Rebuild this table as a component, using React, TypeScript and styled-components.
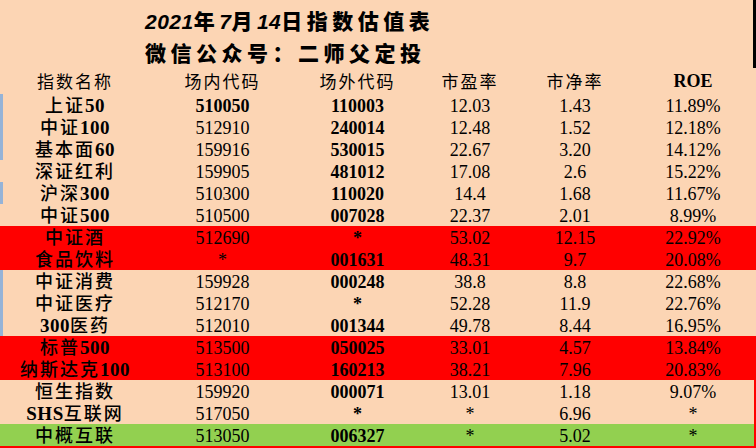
import React from 'react'
import styled, { createGlobalStyle } from 'styled-components'

const GlobalStyle = createGlobalStyle`
  html, body {
    margin: 0;
    padding: 0;
    background: #fcd5b4;
  }
`

type Tone = 'plain' | 'red' | 'green'

interface Fund {
  name: string
  inside: string
  outside: string
  pe: string
  pb: string
  roe: string
  tone?: Tone
  marked?: boolean
  boldInside?: boolean
}

const top: Fund[] = [
  { name: '上证50', inside: '510050', outside: '110003', pe: '12.03', pb: '1.43', roe: '11.89%', marked: true, boldInside: true },
  { name: '中证100', inside: '512910', outside: '240014', pe: '12.48', pb: '1.52', roe: '12.18%', marked: true },
  { name: '基本面60', inside: '159916', outside: '530015', pe: '22.67', pb: '3.20', roe: '14.12%', marked: true },
  { name: '深证红利', inside: '159905', outside: '481012', pe: '17.08', pb: '2.6', roe: '15.22%' },
  { name: '沪深300', inside: '510300', outside: '110020', pe: '14.4', pb: '1.68', roe: '11.67%', marked: true },
  { name: '中证500', inside: '510500', outside: '007028', pe: '22.37', pb: '2.01', roe: '8.99%' },
  { name: '中证酒', inside: '512690', outside: '*', pe: '53.02', pb: '12.15', roe: '22.92%', tone: 'red' },
  { name: '食品饮料', inside: '*', outside: '001631', pe: '48.31', pb: '9.7', roe: '20.08%', tone: 'red' },
  { name: '中证消费', inside: '159928', outside: '000248', pe: '38.8', pb: '8.8', roe: '22.68%', marked: true },
  { name: '中证医疗', inside: '512170', outside: '*', pe: '52.28', pb: '11.9', roe: '22.76%', marked: true },
  { name: '300医药', inside: '512010', outside: '001344', pe: '49.78', pb: '8.44', roe: '16.95%', marked: true },
  { name: '标普500', inside: '513500', outside: '050025', pe: '33.01', pb: '4.57', roe: '13.84%', tone: 'red' },
  { name: '纳斯达克100', inside: '513100', outside: '160213', pe: '38.21', pb: '7.96', roe: '20.83%', tone: 'red' },
]

const tail: Fund[] = [
  { name: '恒生指数', inside: '159920', outside: '000071', pe: '13.01', pb: '1.18', roe: '9.07%' },
  { name: 'SHS互联网', inside: '517050', outside: '*', pe: '*', pb: '6.96', roe: '*' },
  { name: '中概互联', inside: '513050', outside: '006327', pe: '*', pb: '5.02', roe: '*', tone: 'green' },
]

const heads = ['指数名称', '场内代码', '场外代码', '市盈率', '市净率']

// latin runs in a name get the serif bold face, the rest stays CJK
const splitName = (name: string) =>
  name.split(/([A-Za-z0-9]+)/).filter(Boolean).map((part, i) =>
    /^[A-Za-z0-9]+$/.test(part) ? <Latin key={i}>{part}</Latin> : <Han key={i}>{part}</Han>
  )

const FundRow = ({ f }: { f: Fund }) => (
  <Row $tone={f.tone || 'plain'} $marked={!!f.marked}>
    <NameCell>{splitName(f.name)}</NameCell>
    <Cell $bold={!!f.boldInside}>{f.inside}</Cell>
    <Cell $bold>{f.outside}</Cell>
    <Cell>{f.pe}</Cell>
    <Cell>{f.pb}</Cell>
    <Cell>{f.roe}</Cell>
  </Row>
)

export default function App() {
  return (
    <Page>
      <GlobalStyle />
      <TitleBlock>
        <TitleLine>
          <Num>2021</Num>年<Num>7</Num>月<Num>14</Num>日指数估值表
        </TitleLine>
        <TitleLine>微信公众号：二师父定投</TitleLine>
      </TitleBlock>
      <Table>
        <HeadRow>
          {heads.map((h) => (
            <HeadCell key={h}>{h}</HeadCell>
          ))}
          <HeadCell $latin>ROE</HeadCell>
        </HeadRow>
        {top.map((f) => (
          <FundRow key={f.name} f={f} />
        ))}
        <Tail>
          {tail.map((f) => (
            <FundRow key={f.name} f={f} />
          ))}
        </Tail>
      </Table>
    </Page>
  )
}

const Page = styled.div`
  width: 756px;
  height: 448px;
  overflow: hidden;
  background: #fcd5b4;
  color: #000;
`

const TitleBlock = styled.div`
  height: 68px;
  padding: 4px 0 0 145px;
  box-sizing: border-box;
  border-right: 3px solid #000;
  font-family: "Noto Sans CJK SC", sans-serif;
  font-weight: 900;
  font-size: 21px;
  letter-spacing: 4.5px;
`

const TitleLine = styled.div`
  height: 32px;
  line-height: 32px;
  white-space: pre;
`

const Num = styled.span`
  font-style: italic;
  letter-spacing: 0.5px;
  font-family: "Liberation Sans", sans-serif;
  font-size: 21px;
`

const Table = styled.div`
  display: flex;
  flex-direction: column;
`

const cols = '150px 145px 125px 100px 110px 126px'

const HeadRow = styled.div`
  display: grid;
  grid-template-columns: ${cols};
  height: 26px;
  align-items: center;
`

const HeadCell = styled.div<{ $latin?: boolean }>`
  text-align: center;
  font-family: ${(p) => (p.$latin ? '"Liberation Serif", serif' : '"Noto Sans CJK SC", sans-serif')};
  font-weight: ${(p) => (p.$latin ? 700 : 400)};
  font-size: ${(p) => (p.$latin ? '18px' : '17px')};
  letter-spacing: ${(p) => (p.$latin ? '0' : '2px')};
  line-height: 26px;
`

const toneColor: Record<Tone, string> = {
  plain: 'transparent',
  red: '#ff0000',
  green: '#92d050',
}

const Row = styled.div<{ $tone: Tone; $marked: boolean }>`
  display: grid;
  grid-template-columns: ${cols};
  height: 22px;
  box-sizing: border-box;
  padding-top: 3px;
  background: ${(p) => toneColor[p.$tone]};
  box-shadow: ${(p) => (p.$marked ? 'inset 3px 0 0 #95b3d7' : 'none')};
`

const Cell = styled.div<{ $bold?: boolean }>`
  text-align: center;
  font-family: "Liberation Serif", serif;
  font-size: 18px;
  font-weight: ${(p) => (p.$bold ? 700 : 400)};
  line-height: 19px;
  height: 19px;
  white-space: nowrap;
`

const NameCell = styled.div`
  display: flex;
  justify-content: center;
  align-items: baseline;
  height: 19px;
  margin-top: -2px;
  white-space: nowrap;
`

const Han = styled.span`
  font-family: "Noto Sans CJK SC", sans-serif;
  font-size: 18px;
  font-weight: 500;
  letter-spacing: 2px;
  line-height: 19px;
`

const Latin = styled.span`
  font-family: "Liberation Serif", serif;
  font-weight: 700;
  font-size: 19px;
  letter-spacing: 0.5px;
  line-height: 19px;
`

const Tail = styled.div`
  display: flex;
  flex-direction: column;
  border-right: 2px solid #ff0000;
  border-bottom: 2px solid #ff0000;
`
